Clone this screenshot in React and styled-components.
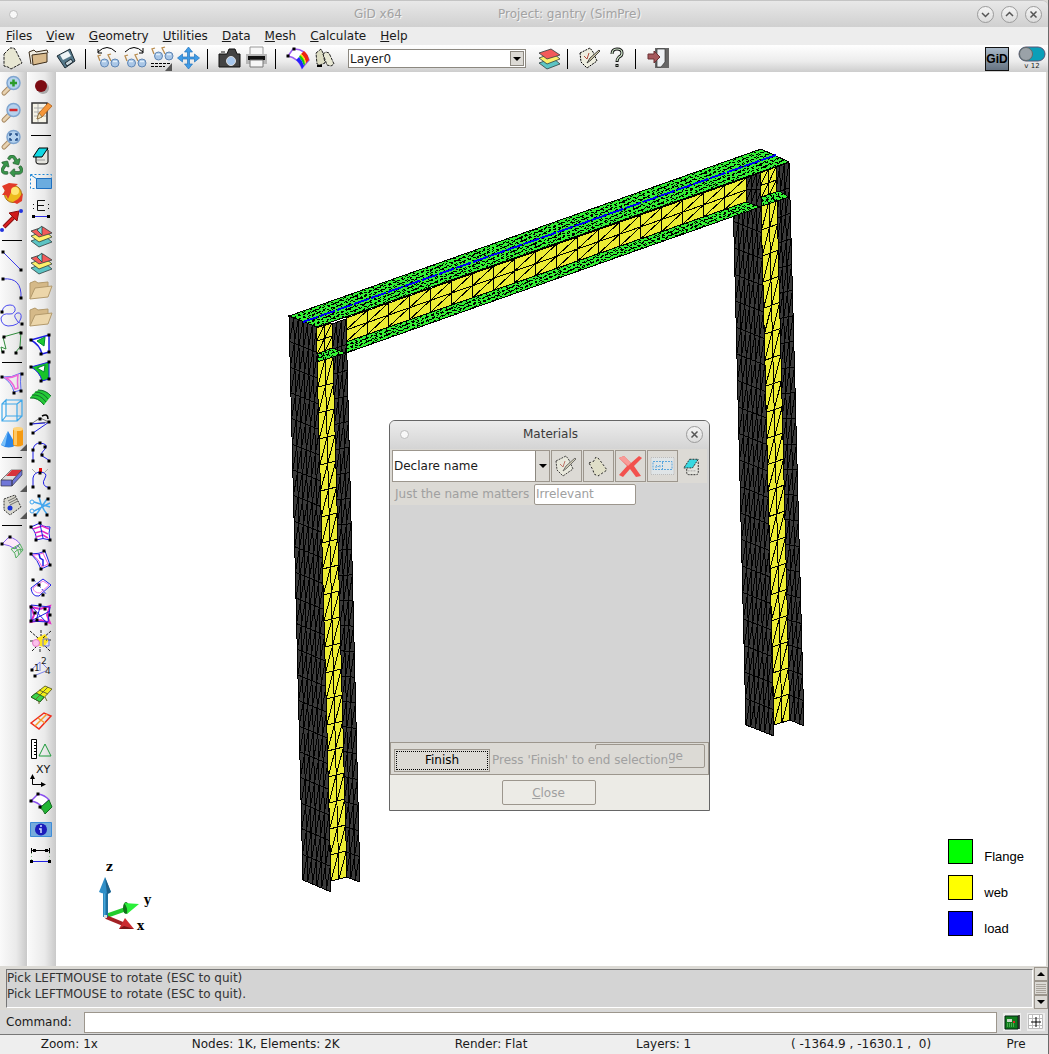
import { useState } from "react";
import styled, { createGlobalStyle } from "styled-components";
import { FaRecycle } from "react-icons/fa";

const GlobalStyle = createGlobalStyle`
  *, *::before, *::after {
    box-sizing: border-box;
  }
  body {
    margin: 0;
    background: #dcdad5;
  }
  body, button, input, select {
    font-family: "DejaVu Sans", Verdana, sans-serif;
    font-size: 12px;
    color: #1a1a1a;
  }
`;

const Window = styled.div`
  display: flex;
  flex-direction: column;
  min-height: 100vh;
  border-right: 1px solid #6a6a6a;
`;

const TitleBar = styled.header`
  display: grid;
  grid-template-columns: 80px 1fr 136px;
  align-items: center;
  height: 27px;
  padding: 0 6px 0 9px;
  background: linear-gradient(#e8e8e8, #d0d0d0);
  border-top: 1px solid #c4c4c4;
  border-radius: 0 6px 0 0;
`;

const Titles = styled.div`
  display: flex;
  justify-content: center;
  gap: 96px;
  color: #a2a2a2;
  text-shadow: 1px 1px 0 #f4f4f4;
`;

const Pin = styled.span`
  width: 9px;
  height: 9px;
  border: 1px solid #bdbdbd;
  border-radius: 50%;
  background: #f8f8f8;
`;

const WindowButtons = styled.div`
  display: flex;
  justify-content: flex-end;
  gap: 7px;
`;

const RoundButton = styled.button`
  display: flex;
  width: 17px;
  height: 17px;
  padding: 0;
  border: 1px solid #9b9b9b;
  border-radius: 50%;
  background: linear-gradient(#f4f4f4, #dcdcdc);
`;

const MenuBar = styled.nav`
  display: flex;
  align-items: center;
  gap: 14px;
  height: 18px;
  padding: 0 6px;
  background: #ededed;
`;

const MenuLink = styled.a`
  color: #1a1a1a;
  text-decoration: none;
  line-height: 16px;
`;

const TopBar = styled.div`
  display: flex;
  align-items: center;
  height: 27px;
  padding-right: 2px;
  background: linear-gradient(#fff, #ececec 60%, #cdcdcd);
`;

const SideBar = styled.div`
  display: flex;
  flex-direction: column;
  width: 28px;
  border-right: ${props => (props.$divided ? "1px solid #fff" : "0")};
  background: linear-gradient(90deg, #fafafa, #eaeaea 60%, #c9c9c9);
`;

const ToolButton = styled.button`
  display: flex;
  flex: none;
  width: 27px;
  height: 27px;
  padding: 0;
  border: 0;
  background: none;
`;

const VLine = styled.span`
  width: 1px;
  height: 20px;
  margin: 0 9px 0 4px;
  background: #000;
`;

const HLine = styled.span`
  width: 20px;
  height: 1px;
  margin: ${props => (props.$wide ? "9px 3px 6px" : "6px 2px 7px")};
  background: #000;
`;

const Spacer = styled.span`
  flex: 1;
`;

const LayerBox = styled.div`
  position: relative;
  width: 178px;
  margin: 0 10px 0 9px;
`;

const Select = styled.select`
  display: block;
  width: 100%;
  height: ${props => props.$height};
  padding: 0 0 0 1px;
  border: ${props => props.$border};
  border-radius: 0;
  background: #fff;
  appearance: none;
`;

const Arrow = styled.span`
  position: absolute;
  top: 2px;
  right: 2px;
  display: flex;
  width: 14px;
  height: ${props => props.$height};
  align-items: center;
  justify-content: center;
  border: 1px solid #8c8880;
  background: #dcdad5;
  pointer-events: none;
  &::after {
    content: "";
    border: 4px solid transparent;
    border-top-color: #000;
    border-bottom: 0;
  }
`;

const Badge = styled.span`
  width: 24px;
  height: 24px;
  margin-right: 9px;
  border: 1px solid #111;
  background: linear-gradient(#a9b9c9, #667382);
  font: bold 12px/22px "Liberation Sans", Arial, sans-serif;
  text-align: center;
  color: #000;
`;

const Version = styled.div`
  display: flex;
  flex-direction: column;
  align-items: center;
  width: 28px;
  font-size: 7px;
  line-height: 9px;
`;

const Main = styled.main`
  display: flex;
  flex: 1;
  border-right: 2px solid #dcdad5;
`;

const Canvas = styled.section`
  position: relative;
  flex: 1;
  min-height: 790px;
  background: #fff;
`;

const Scene = styled.svg`
  position: absolute;
  inset: 0;
  width: 100%;
  height: 100%;
`;

const Legend = styled.ul`
  position: absolute;
  right: 22px;
  bottom: 30px;
  display: grid;
  gap: 11px;
  margin: 0;
  padding: 0;
  list-style: none;
`;

const LegendItem = styled.li`
  display: flex;
  align-items: flex-end;
  gap: 11px;
  font: 13px/15px "Liberation Sans", Arial, sans-serif;
  color: #000;
  &::before {
    content: "";
    width: 25px;
    height: 25px;
    border: 1px solid #000;
    background: ${props => props.$color};
  }
`;

const Dialog = styled.section`
  position: absolute;
  left: 333px;
  top: 348px;
  display: flex;
  flex-direction: column;
  width: 321px;
  height: 391px;
  border: 1px solid #666;
  border-radius: 6px 6px 0 0;
  background: #d4d4d4;
  overflow: hidden;
`;

const DialogTitle = styled.div`
  display: grid;
  grid-template-columns: 30px 1fr 32px;
  align-items: center;
  height: 28px;
  padding: 0 6px 2px 10px;
  background: linear-gradient(#ececec, #d4d4d4);
  text-align: center;
  color: #3a3a3a;
`;

const MaterialRow = styled.div`
  display: flex;
  gap: 1px;
  height: 34px;
  margin-right: 2px;
  padding: 1px 2px 0;
  background: #dcdad5;
`;

const MaterialBox = styled.div`
  position: relative;
  flex: none;
  width: 158px;
`;

const MaterialArrow = styled(Arrow)`
  top: 1px;
  right: 1px;
  border-width: 0 0 0 1px;
`;

const RaisedButton = styled.button`
  display: flex;
  flex: none;
  align-items: center;
  justify-content: center;
  width: ${props => (props.$flat ? "26px" : "31px")};
  height: 32px;
  padding: 0;
  border: ${props => (props.$flat ? "0" : "1px solid #9c968d")};
  background: #dcdad5;
`;

const FieldRow = styled.div`
  display: flex;
  align-items: center;
  width: 246px;
  height: 22px;
  padding-left: 5px;
  background: #dcdad5;
`;

const FieldLabel = styled.label`
  flex: 1;
  color: #a0a0a0;
`;

const Field = styled.input`
  width: 102px;
  height: 21px;
  padding: 0 1px;
  border: 1px solid #9c968d;
  border-radius: 2px;
  background: #fff;
  color: #a0a0a0;
`;

const FinishBar = styled.div`
  position: relative;
  display: flex;
  align-items: center;
  height: 33px;
  margin-top: auto;
  padding: 3px 3px 0;
  border: 1px solid #9c968d;
  background: #dcdad5;
`;

const CoveredButton = styled.button`
  position: absolute;
  top: 1px;
  right: 3px;
  width: 110px;
  height: 24px;
  padding: 0 0 0 72px;
  border: 1px solid #9c968d;
  border-radius: 2px;
  background: #dcdad5;
  color: #a0a0a0;
  text-align: left;
`;

const FinishButton = styled.button`
  position: relative;
  width: 96px;
  height: 23px;
  border: 1px solid #9c968d;
  background: #dcdad5;
  outline: 1px dotted #000;
  outline-offset: -3px;
  color: #000;
`;

const Hint = styled.span`
  position: relative;
  padding: 0 1px 0 2px;
  line-height: 22px;
  background: #dcdad5;
  color: #a0a0a0;
  white-space: nowrap;
`;

const CloseArea = styled.div`
  display: flex;
  justify-content: center;
  height: 35px;
  padding: 5px 2px 5px 0;
  background: #ecebe6;
`;

const CloseButton = styled.button`
  width: 94px;
  border: 1px solid #9c968d;
  border-radius: 2px;
  background: #ecebe6;
  color: #a0a0a0;
  &::first-letter {
    text-decoration: underline;
  }
`;

const LogArea = styled.div`
  display: flex;
  height: 44px;
  padding: 1px 0 2px 6px;
  background: #dcdad5;
`;

const Log = styled.div`
  flex: 1;
  margin: 2px 1px 0 0;
  border: 1px solid #fff;
  border-top-color: #777;
  border-left-color: #777;
  background: #d4d4d4;
  line-height: 16px;
  color: #333;
  p {
    margin: 0;
  }
`;

const ScrollBar = styled.div`
  display: flex;
  flex-direction: column;
  width: 14px;
`;

const ScrollPart = styled.button`
  display: flex;
  flex: 1;
  padding: 0;
  border: 1px solid #9c968d;
  background: #dcdad5;
`;

const CommandRow = styled.div`
  display: flex;
  align-items: center;
  gap: 6px;
  height: 24px;
  padding: 0 3px 0 6px;
  background: #d8d8d8;
`;

const CommandLabel = styled.label`
  width: 72px;
`;

const CommandInput = styled.input`
  flex: 1;
  height: 21px;
  border: 1px solid #9c968d;
  background: #fff;
`;

const SmallButton = styled.button`
  display: flex;
  width: 18px;
  height: 18px;
  padding: 0;
  border: 0;
  background: #ededed;
`;

const StatusBar = styled.footer`
  display: grid;
  grid-template-columns: 139fr 255fr 197fr 149fr 247fr 64fr;
  height: 20px;
  border-top: 1px solid #777;
  background: #eee;
  line-height: 19px;
  text-align: center;
  white-space: pre;
`;

const Icon = ({ children, size = 27 }) => (
  <svg width={size} height={size} viewBox={`0 0 ${size} ${size}`} fill="none">
    {children}
  </svg>
);

const Dots = ({ at, color = "#000" }) =>
  at.map(([x, y], i) => (
    <rect key={i} x={x - 1.5} y={y - 1.5} width="3" height="3" fill={color} />
  ));

const Lens = ({ children }) => (
  <>
    <path d="M9 16L4 21" stroke="#a88a64" strokeWidth="5" strokeLinecap="round" />
    <path d="M9 16L4 21" stroke="#e8d2b0" strokeWidth="3" strokeLinecap="round" />
    <circle cx="13.500" cy="11" r="6.500" fill="#b5d2ee" stroke="#7fa5d0" strokeWidth="1.500" />
    {children}
  </>
);

const Glasses = ({ y = 0 }) => (
  <g transform={`translate(0 ${y})`}>
    <path d="M5 16L3 11l3-1M16 16l-3-6 3-1" stroke="#b98c4d" strokeWidth="1.300" />
    <circle cx="9.500" cy="18" r="4" fill="#a9c6e6" stroke="#5f86b5" />
    <circle cx="20" cy="18" r="4" fill="#a9c6e6" stroke="#5f86b5" />
    <path d="M7 16.500h4M18 16.500h4" stroke="#e0eefb" strokeWidth="1.500" />
  </g>
);

const Stack = ({ mark }) => (
  <g stroke="#2f3f3f" strokeWidth=".8">
    <path d="M3 18l14-5 7 6-13 5z" fill="#5cc4c4" />
    <path d="M3 13l14-5 7 6-13 5z" fill="#fdf06a" />
    <path d="M3 8l12-4 9 6-13 4z" fill="#f25a5a" />
    {mark && <path d="M14 3v9l-5-5z" fill="#7ce0e0" />}
  </g>
);

const Corner = () => <path d="M27 20v7h-7z" fill="#555" />;

const Folder = () => (
  <g stroke="#b39a6c">
    <path d="M2 22V6l5-2 3 2 10-1v5" fill="#d5b988" />
    <path d="M2 22l5-11 17-2-4 11z" fill="#ecd6aa" />
  </g>
);

const Book = () => (
  <g stroke="#000">
    <path d="M8 13v7q0 2 3 2h6q3 0 3-2V8l-2-2" fill="#e4e4de" />
    <path d="M11 6h9l-6 9H5z" fill="#10d8e4" />
    <path d="M9 18h8" stroke="#999" />
  </g>
);

const Note = () => (
  <g>
    <path d="M3 8l10-5 3 4 4 9-10 7-6-6z" fill="#eeeee0" stroke="#000" strokeDasharray="2 1" />
    <path d="M7 11l3 3 2-6" stroke="#b14a3a" />
    <path d="M10 18l3-5 9-8 1 1-9 9z" fill="#cfc8a8" stroke="#222" strokeWidth=".8" />
  </g>
);

const icons = {
  page: (
    <path
      d="M4 9L10 3h4l2 3 6 12-11 6-3-2-4-1z"
      fill="#e8e7d3"
      stroke="#222"
      strokeDasharray="3 1"
    />
  ),
  open: (
    <g stroke="#3b2c1a">
      <path d="M4 19L2 7l5-2 2 2 11-2 1 3" fill="#f0ece0" />
      <path d="M6 20L5 10l15-2v9z" fill="#d9ba8c" />
    </g>
  ),
  save: (
    <g stroke="#1c2a33">
      <path d="M3 11l13-7 5 12-10 7z" fill="#55788a" />
      <path d="M6 10l8-4 3 5-8 4z" fill="#eef4f6" stroke="none" />
      <path d="M11 18l6-4 2 3-6 4z" fill="#c9d6dc" />
    </g>
  ),
  prev: (
    <>
      <Glasses />
      <path d="M3 7q9-9 18 0M3 4v4h4" stroke="#000" />
    </>
  ),
  next: (
    <>
      <Glasses />
      <path d="M3 7q9-9 18 0M21 3v5h-4" stroke="#000" />
    </>
  ),
  views: (
    <>
      <Glasses y={-7} />
      <path d="M2 18.500h20M2 21.500h14" stroke="#000" strokeDasharray="3 1" />
      <path d="M23 18v8h-7z" fill="#555" />
    </>
  ),
  move: (
    <path
      d="M12.500 2l4 5h-3v5h5V9l5 4-5 4v-3h-5v5h3l-4 5-4-5h3v-5h-5v3l-5-4 5-4v3h5V7h-3z"
      fill="#3f9be6"
      stroke="#2474bc"
      strokeWidth=".7"
    />
  ),
  camera: (
    <>
      <path d="M2 9h8l2-5h6l2 5h3v13H2z" fill="#444" stroke="#111" />
      <path d="M4 9V6h4v3" fill="#888" />
      <circle cx="14" cy="16" r="4.500" fill="#a8c8ee" stroke="#ddd" />
    </>
  ),
  print: (
    <>
      <path d="M6 2h13v8H6z" fill="#f7f7f7" stroke="#999" />
      <path d="M2 9h21v10H2z" fill="#b8b8b8" />
      <path d="M4 11h17v4H4z" fill="#111" />
      <path d="M6 15h13v7H6z" fill="#f7f7f7" stroke="#777" />
    </>
  ),
  contour: (
    <>
      <path d="M8 4q12-1 16 11l-7 8Q13 13 3 11z" fill="#fff" stroke="#9a5cf0" strokeWidth="1.500" />
      <path d="M19 6q4 3 5 9l-3 3q-1-6-5-9z" fill="#e21" />
      <path d="M16 9q4 3 5 9l-1 1q-2-6-5-9z" fill="#fd0" />
      <path d="M15 10q4 3 5 9l-1 2q-2-6-5-9z" fill="#1c1" />
      <path d="M14 12q3 3 5 9l-2 3q-2-6-6-9z" fill="#22f" />
      <Dots at={[[9, 4], [3, 11]]} />
    </>
  ),
  books: (
    <>
      <path d="M4 8l5-4 2 4 2 10-5 2-3-1z" fill="#dcdcc2" stroke="#222" strokeDasharray="3 1" />
      <path d="M11 9l3-2 3 1 5 11-3 2-4-1z" fill="#e8e8d4" stroke="#222" strokeDasharray="3 1" />
      <path d="M5 21h5" stroke="#000" strokeWidth="2" />
    </>
  ),
  layers: <Stack />,
  layersMark: <Stack mark />,
  note: <Note />,
  help: (
    <>
      <path d="M8 9q0-5 5-5t5 4q0 3-3 4-2 2-2 5M13 19v3" stroke="#111" strokeWidth="3" />
      <path d="M8 9q0-5 5-5t5 4q0 3-3 4-2 2-2 4M13 20v1" stroke="#d5ecd0" strokeWidth="1.200" />
    </>
  ),
  exit: (
    <>
      <path d="M10 3h14v20H10z" fill="#666" />
      <path d="M12 4h8v13l-4 5h-4z" fill="#eef1f4" stroke="#333" strokeWidth=".7" />
      <path d="M3 9h6V6l6 6-6 6v-4H3z" fill="#a5585c" stroke="#6c3033" />
    </>
  ),
  zoomIn: (
    <Lens>
      <path d="M10 11h7M13.500 7.500v7" stroke="#2b9c2b" strokeWidth="2.500" />
    </Lens>
  ),
  zoomOut: (
    <Lens>
      <path d="M9.500 11h8" stroke="#d3262b" strokeWidth="2.500" />
    </Lens>
  ),
  zoomFit: (
    <Lens>
      <path d="M10 10V8h2M15 8h2v2M17 12v2h-2M12 14h-2v-2" stroke="#1f4b86" strokeWidth="1.500" />
    </Lens>
  ),
  rotate: (
    <svg x="1" y="2" width="22" height="22" overflow="visible">
      <FaRecycle size={22} color="#39954b" stroke="#174d22" strokeWidth="14" />
    </svg>
  ),
  render: (
    <>
      <circle cx="13" cy="14" r="8.500" fill="#edbb1c" stroke="#a56b12" />
      <path d="M2 6l7-3 9 1-5 4-5 11-2-4H2l3-4zM13 22l5-3 5-6-1 8-5 3z" fill="#e23b28" />
      <circle cx="15" cy="11" r="4" fill="#ffe774" />
    </>
  ),
  vector: (
    <>
      <path d="M4 20L15 9" stroke="#8c0f0f" strokeWidth="4" />
      <path d="M4 20L15 9" stroke="#dd2222" strokeWidth="2" />
      <path d="M19 4l-2 10-8-8z" fill="#d11a1a" stroke="#8c0f0f" />
      <circle cx="2" cy="23" r="2" fill="#2233dd" />
      <circle cx="21" cy="4" r="2" fill="#2233dd" />
    </>
  ),
  line: (
    <>
      <path d="M3 4l18 18" stroke="#3c3ce8" />
      <Dots at={[[3, 4], [21, 22]]} />
    </>
  ),
  arc: (
    <>
      <path d="M3 4q19-2 18 19" stroke="#3c3ce8" />
      <Dots at={[[3, 4], [21, 23]]} />
    </>
  ),
  nurbs: (
    <>
      <path
        d="M2 10Q3 3 10 3q6 0 5 6-2 4-6 3-6-1-8 4 0 7 7 8 11 0 13-8 1-6-4-5-4 2-1 6 2 4 4 4"
        stroke="#4a4af0"
      />
      <Dots at={[[2, 10], [22, 22]]} />
    </>
  ),
  poly: (
    <>
      <path d="M2 23l-1-5 5 2-3-12 18-5-1 15-5 6" stroke="#2e8b3a" />
      <Dots at={[[4, 8], [21, 4], [21, 19], [3, 23], [16, 24]]} />
    </>
  ),
  surface: (
    <>
      <path d="M3 7q8 1 18-4-1 9 0 17l-7 2Q12 13 3 7z" stroke="#5c6cf2" />
      <path d="M6 8q6 0 12-3-1 8 0 13l-3 1Q13 12 6 8z" stroke="#ee67d8" strokeWidth="1.500" />
      <Dots at={[[2, 7], [22, 4], [21, 21], [14, 23]]} />
    </>
  ),
  cube: (
    <path
      d="M2 7h15v17H2zM6 3h16v16H6V3L2 7M22 3l-5 4M22 19l-5 5M2 24l4-5"
      stroke="#3fa8ea"
      strokeWidth="1.200"
    />
  ),
  solids: (
    <>
      <path d="M8 7l8 14q-7 5-15 0z" fill="#2b86e8" />
      <path d="M8 7L5 22l-4-1z" fill="#7cc2fa" />
      <path d="M13 5q5-3 10 0v16q-5 3-10 0z" fill="#f59a12" />
      <path d="M14 6h3v15h-3z" fill="#ffc864" />
      <ellipse cx="18" cy="5" rx="5" ry="2" fill="#ffd37a" />
      <Corner />
    </>
  ),
  erase: (
    <>
      <path d="M1 15L11 5h11L12 16z" fill="#ddd" stroke="#555" strokeWidth=".7" />
      <path d="M12 5h10l-6 6H6z" fill="#d8343c" />
      <path d="M1 15h11v6H1zM12 16L22 5v5L12 21z" fill="#7077d8" stroke="#334" strokeWidth=".7" />
      <Corner />
    </>
  ),
  list: (
    <>
      <path d="M4 7l11-4 6 12-11 8-6-5z" fill="#d7d6cc" stroke="#333" strokeDasharray="2 1" />
      <path d="M8 9l8-4M9 11l8-4M10 13l8-4" stroke="#555" strokeWidth=".8" />
      <circle cx="10" cy="16" r="2.500" fill="#1b33d4" />
      <Corner />
    </>
  ),
  mesh: (
    <>
      <path d="M2 11l7-7q8 2 11 7l-5 5q-5-4-13-5z" fill="#fde8fa" stroke="#8760ee" />
      <path
        d="M20 11l3 6-7 8q0-5-5-9l5-1M13 15l7-4M15 14q4 3 4 8M18 13q3 2 3 6M14 20q4-5 9-3"
        stroke="#55b062"
      />
      <Dots at={[[10, 4], [2, 11]]} />
    </>
  ),
  dot: (
    <>
      <circle cx="15" cy="16" r="6" fill="#aaa" />
      <circle cx="13" cy="14" r="6" fill="#7c0c12" />
    </>
  ),
  edit: (
    <>
      <path d="M4 4h15v20H4z" fill="#f5f3e6" stroke="#333" strokeWidth="1.500" />
      <path d="M6 9h12M6 13h12M6 17h12M10 5v18" stroke="#aaa" />
      <path d="M9 20l2-6L20 4l4 3-10 11z" fill="#f59638" stroke="#a3520a" strokeWidth=".7" />
      <path d="M9 20l2-6 3 4z" fill="#f4dcb0" stroke="#553" strokeWidth=".5" />
    </>
  ),
  book: <Book />,
  select: (
    <>
      <path d="M2.500 5.500h21v14h-21z" stroke="#1d86d6" strokeDasharray="2 2" />
      <path d="M8.500 9.500h15v10h-15z" fill="#6bacdf" stroke="#1d6fc0" />
      <path d="M3 6l6 4" stroke="#1d86d6" />
    </>
  ),
  label: (
    <>
      <path d="M17 4.500H9.500v10H17M10 9.500h6" stroke="#111" />
      <path d="M5 20.500h15" stroke="#2a2ae0" />
      <path d="M5.500 8v8M20.500 8v8" stroke="#111" strokeDasharray="1 3" />
      <Dots at={[[5.5, 20.5], [20.5, 20.5]]} />
    </>
  ),
  folder: <Folder />,
  triMesh: (
    <>
      <path d="M3 9L21 4v17l-7 2q-2-9-11-14z" fill="#fff" stroke="#1d1de4" strokeWidth="1.500" />
      <path d="M9 10l8-4-1 9z" fill="#1ec82f" stroke="#083" />
      <Dots at={[[3, 9], [21, 4], [21, 21], [13, 23]]} />
    </>
  ),
  fillMesh: (
    <>
      <path d="M3 9L21 4v17l-7 2q-2-9-11-14z" fill="#17c42a" stroke="#1d1de4" />
      <path d="M9 10l8-3-1 7z" fill="#fff" stroke="#083" />
      <Dots at={[[3, 9], [21, 4], [21, 21], [13, 23]]} />
    </>
  ),
  bands: (
    <>
      <path d="M2 13q6-9 11-8 6 1 10 6l-7 9q-6-7-14-7z" fill="#24c936" />
      <path
        d="M2 13q8-1 14 7M4 10q8-1 14 7M7 7q8 0 13 7M10 5q8 0 13 6"
        stroke="#146a2c"
      />
    </>
  ),
  node: (
    <>
      <path d="M3 12l9-6 9 4L3 12" stroke="#777" />
      <path d="M3 12l14-1M5 21l16-11" stroke="#1d1de4" />
      <path d="M14 4q6-3 6 3" stroke="#000" strokeWidth="1.500" />
      <Dots at={[[3, 12], [12, 7], [21, 10], [5, 21]]} />
    </>
  ),
  curve: (
    <>
      <path d="M5 22V11q1-7 7-7 9 1 5 6-7 7-1 8l6 4" stroke="#1d1de4" />
      <Dots at={[[5, 22], [5, 11], [12, 4], [17, 8], [14, 16], [21, 22]]} />
    </>
  ),
  curveTop: (
    <>
      <path d="M5 22V12q1-6 8-6 7 1 4 6-5 8 5 10" stroke="#1d1de4" />
      <path d="M4 3l4 4M20 3l-4 4" stroke="#aaa" />
      <path d="M11 2h3v4h-3z" fill="#e11" />
      <Dots at={[[5, 21], [12, 7], [21, 22]]} />
    </>
  ),
  cut: (
    <>
      <path d="M6 9l16 5M6 18L22 10M11 4q2 10 8 17M19 6L8 22" stroke="#46a7ee" strokeWidth="1.500" />
      <circle cx="4" cy="9" r="2" stroke="#46a7ee" />
      <circle cx="4" cy="18" r="2" stroke="#46a7ee" />
      <Dots at={[[11, 3], [20, 6], [7, 22], [19, 22]]} />
    </>
  ),
  patch1: (
    <>
      <path d="M3 7l9-4q2 4 10 4-2 6 0 13-7-3-14 0 1-7-5-13z" fill="#fff" stroke="#1d1de4" />
      <path d="M5 9l9-3 7 3M7 13l7-2 6 3M8 17l7-2 5 3" stroke="#e22bc2" strokeWidth="1.500" />
      <path d="M12 4l3 14" stroke="#1d1de4" />
      <Dots at={[[3, 7], [12, 3], [22, 20], [8, 20]]} />
    </>
  ),
  patch2: (
    <>
      <path d="M3 7q9 0 14-3l5 14-9 4Q10 13 3 7z" fill="#fff" stroke="#1d1de4" />
      <path d="M5 8q7 0 10-2l5 11-6 3Q11 12 5 8z" stroke="#f05ad8" />
      <path d="M11 7l1 4 3 2v6" stroke="#1d1de4" strokeWidth="1.500" />
      <Dots at={[[3, 7], [16, 4], [22, 18], [13, 22]]} />
    </>
  ),
  patch3: (
    <>
      <path d="M3 14l12-9 8 6-12 11q-7 1-8-8z" fill="#fff" stroke="#1d1de4" />
      <path d="M5 14l10-7 6 4-9 8q-6 0-7-5z" stroke="#f07be0" />
      <path d="M6 6l13 15" stroke="#1d1de4" strokeDasharray="2 2" />
      <Dots at={[[5, 6], [11, 11], [15, 21]]} />
    </>
  ),
  patch4: (
    <>
      <path d="M3 6l9 2 10-3-3 9 3 8-9-3-10 2 3-7z" fill="#fff" stroke="#e22bc2" strokeWidth="2" />
      <path d="M3 4l19 2-2 15L3 20zM3 20L22 10M3 5l16 17M13 3L8 20" stroke="#1d1de4" />
      <Dots at={[[3, 6], [12, 4], [22, 14], [3, 20], [18, 23], [7, 12], [17, 8], [9, 19]]} />
    </>
  ),
  explode: (
    <>
      <path d="M9 10l8-4 4 6-5 7-8-2z" fill="#ffe51e" />
      <path
        d="M2 3l8 7M23 3l-8 7M2 13h5M23 12h-5M4 23l6-6M22 23l-6-6M13 2v6M12 24v-5"
        stroke="#222"
        strokeDasharray="3 1"
      />
      <path d="M15 11h6v7h-6z" stroke="#6a74e8" />
      <circle cx="8" cy="15" r="3.500" fill="#fbc0ea" stroke="#e778c8" />
    </>
  ),
  renumber: (
    <>
      <path d="M4 14l8-7v9M8 20l10-4M14 8l5 5" stroke="#7c84ec" />
      <text x="6" y="16" fontSize="9" fill="#222">1</text>
      <text x="13" y="9" fontSize="9" fill="#222">2</text>
      <text x="17" y="19" fontSize="9" fill="#222">4</text>
      <Dots at={[[4, 15], [7, 21]]} />
    </>
  ),
  panels: (
    <>
      <path d="M3 15l14-11 7 3-12 13z" fill="#f2ee18" stroke="#6b6b2b" />
      <path d="M3 15l5-4 8 4-4 5z" fill="#3cd44a" stroke="#27632b" />
      <path d="M11 8l9 4M8 17L20 5M19 19l-2-4M11 22v-3" stroke="#6b6b2b" />
    </>
  ),
  frame: (
    <>
      <path d="M3 14L16 4l7 3-12 13z" stroke="#ee2a1b" strokeWidth="1.500" />
      <path d="M7 17L19 5M10 9l7 5" stroke="#f79a2b" strokeWidth="1.500" />
    </>
  ),
  ruler: (
    <>
      <path d="M3.500 3.500h5v19h-5z" fill="#fff" stroke="#000" />
      <path d="M6 6.500h3M6 9.500h3M6 12.500h3M6 15.500h3M6 18.500h3" stroke="#000" />
      <path d="M17 8l6 12H11z" stroke="#1d9a3a" />
    </>
  ),
  coords: (
    <>
      <text x="8" y="10" fontSize="11" fill="#111">XY</text>
      <path d="M4.500 13v8.500H15" stroke="#000" />
      <path d="M2 16l2.500-5L7 16zM13 19l5 2.500-5 2.500z" fill="#000" />
    </>
  ),
  shaded: (
    <>
      <path d="M3 11l7-7q7 1 11 6l-7 7q-4-5-11-6z" fill="#fff" stroke="#8a50ee" strokeWidth="1.500" />
      <path d="M14 16l7-6 3 7-7 7q-1-4-6-7z" fill="#22b534" stroke="#126a1e" />
      <Dots at={[[10, 4], [3, 11], [12, 17]]} />
    </>
  ),
  info: (
    <>
      <path d="M2.500 5.500h21v14h-21z" fill="#76abdc" stroke="#3d8cd8" />
      <circle cx="13" cy="12.500" r="6" fill="#1c1cbb" />
      <path d="M13 8v2M11 12h2v4" stroke="#cfe0ff" strokeWidth="1.500" />
    </>
  ),
  measure: (
    <>
      <path d="M4 6.500h17M3.500 4v5M21.500 4v5" stroke="#000" />
      <path d="M4 17.500h17" stroke="#2020e4" />
      <path d="M3.500 9v7M21.500 9v7" stroke="#8bc08b" strokeDasharray="1 2" />
      <Dots at={[[3.5, 17.5], [21.5, 17.5], [6.5, 6.5], [18.5, 6.5]]} />
    </>
  ),
};

const menus = ["Files", "View", "Geometry", "Utilities", "Data", "Mesh", "Calculate", "Help"];

const topTools = [
  "page", "open", "save", "|", "prev", "next", "views", "move", "|",
  "camera", "print", "|", "contour", "books",
];

const leftTools = [
  "zoomIn", "zoomOut", "zoomFit", "rotate", "render", "vector", "|",
  "line", "arc", "nurbs", "poly", "|", "surface", "cube", "solids", "|",
  "erase", "list", "|", "mesh",
];

const rightTools = [
  "dot", "edit", "|", "book", "select", "label", "layersMark", "layersMark",
  "folder", "folder", "triMesh", "fillMesh", "bands", "node", "curve",
  "curveTop", "cut", "patch1", "patch2", "patch3", "patch4", "explode",
  "renumber", "panels", "frame", "ruler", "coords", "shaded", "info", "measure",
];

const legend = [
  { name: "Flange", color: "#00ff00" },
  { name: "web", color: "#ffff00" },
  { name: "load", color: "#0000ff" },
];

const Tool = ({ name }) => (
  <ToolButton aria-label={name}>
    <Icon>{icons[name]}</Icon>
  </ToolButton>
);

// corners go round the quad from the top left, cols and rows are its cells
const meshPath = ([a, b, c, d], cols, rows) => {
  const point = (i, j) => {
    const u = i / cols;
    const v = j / rows;
    const mix = k =>
      (1 - v) * ((1 - u) * a[k] + u * b[k]) + v * ((1 - u) * d[k] + u * c[k]);
    return `${mix(0).toFixed(1)} ${mix(1).toFixed(1)}`;
  };
  let path = "";
  for (let i = 0; i <= cols; i++) path += `M${point(i, 0)}L${point(i, rows)}`;
  for (let j = 0; j <= rows; j++) path += `M${point(0, j)}L${point(cols, j)}`;
  for (let i = 0; i < cols; i++) {
    for (let j = 0; j < rows; j++) path += `M${point(i, j + 1)}L${point(i + 1, j)}`;
  }
  return path;
};

const GREEN = "#35f035";
const YELLOW = "#ecec35";
const DARK = "#3a3a3a";

const plates = [
  // right column
  { color: DARK, cols: 6, rows: 20, at: [[733, 195], [761, 206], [774, 736], [746, 725]] },
  { color: DARK, cols: 3, rows: 2, at: [[746, 178], [761, 172], [761, 207], [746, 202]] },
  { color: DARK, cols: 3, rows: 22, at: [[775, 168], [789, 162], [804, 726], [790, 720]] },
  { color: YELLOW, cols: 2, rows: 2, at: [[760, 173], [776, 167], [777, 193], [761, 198]] },
  { color: YELLOW, cols: 2, rows: 20, at: [[761, 204], [777, 198], [790, 720], [774, 725]] },
  { color: GREEN, cols: 4, rows: 2, at: [[761, 197], [779, 191], [789, 197], [762, 206]] },
  // left column
  { color: DARK, cols: 6, rows: 22, at: [[289, 316], [317, 327], [331, 892], [303, 880]] },
  { color: DARK, cols: 3, rows: 22, at: [[332, 324], [346, 319], [360, 882], [346, 877]] },
  { color: YELLOW, cols: 2, rows: 2, at: [[316, 328], [332, 323], [333, 349], [317, 354]] },
  { color: YELLOW, cols: 2, rows: 20, at: [[317, 361], [333, 357], [347, 877], [331, 881]] },
  // beam
  { color: YELLOW, cols: 19, rows: 2, at: [[346, 318], [746, 178], [746, 202], [346, 342]] },
  { color: GREEN, cols: 20, rows: 3, at: [[346, 342], [746, 202], [760, 207], [346, 353]] },
  { color: GREEN, cols: 4, rows: 2, at: [[317, 354], [332, 348], [346, 353], [317, 362]] },
  { color: GREEN, cols: 23, rows: 6, at: [[289, 316], [761, 149], [789, 162], [317, 327]] },
];

const Gantry = () => (
  <g shapeRendering="crispEdges" fill="none">
    {plates.map((plate, i) => (
      <g key={i} stroke="#000">
        <polygon points={plate.at.join(" ")} fill={plate.color} />
        <path
          d={meshPath(plate.at, plate.cols, plate.rows)}
          strokeDasharray={plate.color === GREEN ? "3 2" : "none"}
        />
      </g>
    ))}
    <path d="M303 322L776 155" stroke="#0000f0" strokeWidth="2" strokeDasharray="16 2" />
  </g>
);

const Axes = () => (
  <g fontFamily="DejaVu Serif, serif" fontWeight="bold" fontSize="12">
    <path d="M106 916L129 908" stroke="#22cc2e" strokeWidth="4" />
    <ellipse cx="126" cy="908" rx="3" ry="6" fill="#11731a" />
    <path d="M139 904l-15-1q4 4 3 11z" fill="#2bf03a" />
    <path d="M106 917L123 924" stroke="#a32025" strokeWidth="4" />
    <path d="M134 929l-9-11-6 11z" fill="#cc2b30" />
    <path d="M119 929l5-3 10 3z" fill="#7c1518" />
    <path d="M105.500 917V890" stroke="#1f6f9f" strokeWidth="5" />
    <path d="M104.500 917V890" stroke="#46a8dd" strokeWidth="2" />
    <path d="M105 877l6 15q-6 3-12 0z" fill="#2f8fc8" />
    <path d="M105 877l6 15q-2 2-4 2z" fill="#1c5f89" />
    <rect x="104" y="915" width="3" height="3" fill="#ddd" />
    <text x="106" y="871">z</text>
    <text x="144" y="904">y</text>
    <text x="137" y="930">x</text>
  </g>
);

const Cross = () => <path d="M4.500 4.500l6 6M10.500 4.500l-6 6" stroke="#555" strokeWidth="1.500" />;

const Materials = () => {
  const [material, setMaterial] = useState("Declare name");
  return (
    <Dialog aria-label="Materials">
      <DialogTitle>
        <Pin />
        <span>Materials</span>
        <WindowButtons>
          <RoundButton aria-label="Close window">
            <Icon size={15}>
              <Cross />
            </Icon>
          </RoundButton>
        </WindowButtons>
      </DialogTitle>
      <MaterialRow>
        <MaterialBox>
          <Select
            aria-label="Material"
            $height="32px"
            $border="1px solid #9c968d"
            value={material}
            onChange={e => setMaterial(e.target.value)}
          >
            <option>Declare name</option>
          </Select>
          <MaterialArrow $height="30px" />
        </MaterialBox>
        <RaisedButton aria-label="Edit">
          <Icon>
            <g opacity=".7">
              <Note />
            </g>
          </Icon>
        </RaisedButton>
        <RaisedButton aria-label="New">
          <Icon>
            <path
              d="M4 10l5-2 2-4 3 2 8 11-9 6-4-2-1-4z"
              fill="#e0dfc8"
              stroke="#222"
              strokeDasharray="2 2"
            />
          </Icon>
        </RaisedButton>
        <RaisedButton aria-label="Delete">
          <Icon>
            <path d="M2 5l5-2 7 7 8-7 3 2-8 8 7 10-5 1-6-8-7 8-4-2 8-9z" fill="#f2524e" />
            <path d="M2 5l5-2 7 7-3 3z" fill="#f89c98" />
          </Icon>
        </RaisedButton>
        <RaisedButton aria-label="Rename">
          <Icon>
            <path d="M2 4.500h23v17H2z" fill="#dfe4e6" stroke="#bbb" strokeDasharray="1 1" />
            <path
              d="M4 8.500h19v8H4zM13.500 9v8M7 15v-3l2 2 2-2v3"
              stroke="#5aa6dd"
              strokeDasharray="2 1"
            />
          </Icon>
        </RaisedButton>
        <RaisedButton $flat aria-label="Help">
          <Icon>
            <g strokeDasharray="2 1" opacity=".8">
              <Book />
            </g>
          </Icon>
        </RaisedButton>
      </MaterialRow>
      <FieldRow>
        <FieldLabel htmlFor="irrelevant">Just the name matters</FieldLabel>
        <Field id="irrelevant" defaultValue="Irrelevant" disabled />
      </FieldRow>
      <FinishBar>
        <CoveredButton disabled>ge</CoveredButton>
        <FinishButton>Finish</FinishButton>
        <Hint>Press 'Finish' to end selection</Hint>
      </FinishBar>
      <CloseArea>
        <CloseButton disabled>Close</CloseButton>
      </CloseArea>
    </Dialog>
  );
};

const App = () => {
  const [layer, setLayer] = useState("Layer0");
  const [command, setCommand] = useState("");

  return (
    <>
      <GlobalStyle />
      <Window>
        <TitleBar>
          <Pin />
          <Titles>
            <span>GiD x64</span>
            <span>Project: gantry (SimPre)</span>
          </Titles>
          <WindowButtons>
            <RoundButton aria-label="Minimize">
              <Icon size={15}>
                <path d="M4 6l3.500 3.500L11 6" stroke="#555" strokeWidth="1.500" />
              </Icon>
            </RoundButton>
            <RoundButton aria-label="Maximize">
              <Icon size={15}>
                <path d="M4 9l3.500-3.500L11 9" stroke="#555" strokeWidth="1.500" />
              </Icon>
            </RoundButton>
            <RoundButton aria-label="Close">
              <Icon size={15}>
                <Cross />
              </Icon>
            </RoundButton>
          </WindowButtons>
        </TitleBar>

        <MenuBar>
          {menus.map(menu => (
            <MenuLink key={menu} href="#">
              <u>{menu[0]}</u>
              {menu.slice(1)}
            </MenuLink>
          ))}
        </MenuBar>

        <TopBar>
          {topTools.map((name, i) =>
            name === "|" ? <VLine key={i} /> : <Tool key={i} name={name} />
          )}
          <LayerBox>
            <Select
              aria-label="Layer"
              $height="19px"
              $border="1px solid #8c8880"
              value={layer}
              onChange={e => setLayer(e.target.value)}
            >
              <option>Layer0</option>
            </Select>
            <Arrow $height="15px" />
          </LayerBox>
          <Tool name="layers" />
          <VLine />
          <Tool name="note" />
          <Tool name="help" />
          <VLine />
          <Tool name="exit" />
          <Spacer />
          <Badge>GiD</Badge>
          <Version>
            <svg width="28" height="16" viewBox="0 0 28 16">
              <rect x="1" y="1" width="26" height="14" rx="7" fill="#0a9fb8" stroke="#557" />
              <circle cx="8" cy="8" r="6.500" fill="#9aa2a8" stroke="#666" />
            </svg>
            <span>v 12</span>
          </Version>
        </TopBar>

        <Main>
          <SideBar $divided>
            {leftTools.map((name, i) =>
              name === "|" ? <HLine key={i} /> : <Tool key={i} name={name} />
            )}
          </SideBar>
          <SideBar>
            {rightTools.map((name, i) =>
              name === "|" ? <HLine key={i} $wide /> : <Tool key={i} name={name} />
            )}
          </SideBar>
          <Canvas>
            <Scene viewBox="56 72 990 894">
              <Gantry />
              <Axes />
            </Scene>
            <Materials />
            <Legend>
              {legend.map(item => (
                <LegendItem key={item.name} $color={item.color}>
                  {item.name}
                </LegendItem>
              ))}
            </Legend>
          </Canvas>
        </Main>

        <LogArea>
          <Log>
            <p>Pick LEFTMOUSE to rotate (ESC to quit)</p>
            <p>Pick LEFTMOUSE to rotate (ESC to quit).</p>
          </Log>
          <ScrollBar>
            <ScrollPart aria-label="Scroll up">
              <Icon size={12}>
                <path d="M2 8l4-4 4 4z" fill="#000" />
              </Icon>
            </ScrollPart>
            <ScrollPart aria-label="Scroll">
              <Icon size={12}>
                <path
                  d="M1 2.500h10M1 4.500h10M1 6.500h10M1 8.500h10M1 10.500h10"
                  stroke="#9c968d"
                  strokeWidth=".8"
                />
              </Icon>
            </ScrollPart>
            <ScrollPart aria-label="Scroll down">
              <Icon size={12}>
                <path d="M2 4l4 4 4-4z" fill="#000" />
              </Icon>
            </ScrollPart>
          </ScrollBar>
        </LogArea>

        <CommandRow>
          <CommandLabel htmlFor="command">Command:</CommandLabel>
          <CommandInput
            id="command"
            value={command}
            onChange={e => setCommand(e.target.value)}
          />
          <SmallButton aria-label="Calculator">
            <Icon size={18}>
              <path d="M2 3h13v13H2z" fill="#0e7a1c" stroke="#021" />
              <path d="M4 6h5v3H4z" fill="#c5d6c5" />
              <path d="M4 11h8M4 13h8" stroke="#7fe07f" strokeDasharray="1 1" />
              <path d="M16 2v14" stroke="#111" strokeWidth="1.500" />
              <path d="M10 8h2v2h-2z" fill="#d22" />
            </Icon>
          </SmallButton>
          <SmallButton aria-label="Grid">
            <Icon size={18}>
              <path d="M1.500 1.500h14v14h-14z" fill="#fff" stroke="#bbb" />
              <path d="M5.500 1v15M12.500 1v15M1 5.500h15M1 12.500h15" stroke="#bbb" />
              <path d="M9 4v10M4 9h10" stroke="#000" />
            </Icon>
          </SmallButton>
        </CommandRow>

        <StatusBar>
          <span>Zoom: 1x</span>
          <span>Nodes: 1K, Elements: 2K</span>
          <span>Render: Flat</span>
          <span>Layers: 1</span>
          <span>{"( -1364.9 , -1630.1 ,  0)"}</span>
          <span>Pre</span>
        </StatusBar>
      </Window>
    </>
  );
};

export default App;
